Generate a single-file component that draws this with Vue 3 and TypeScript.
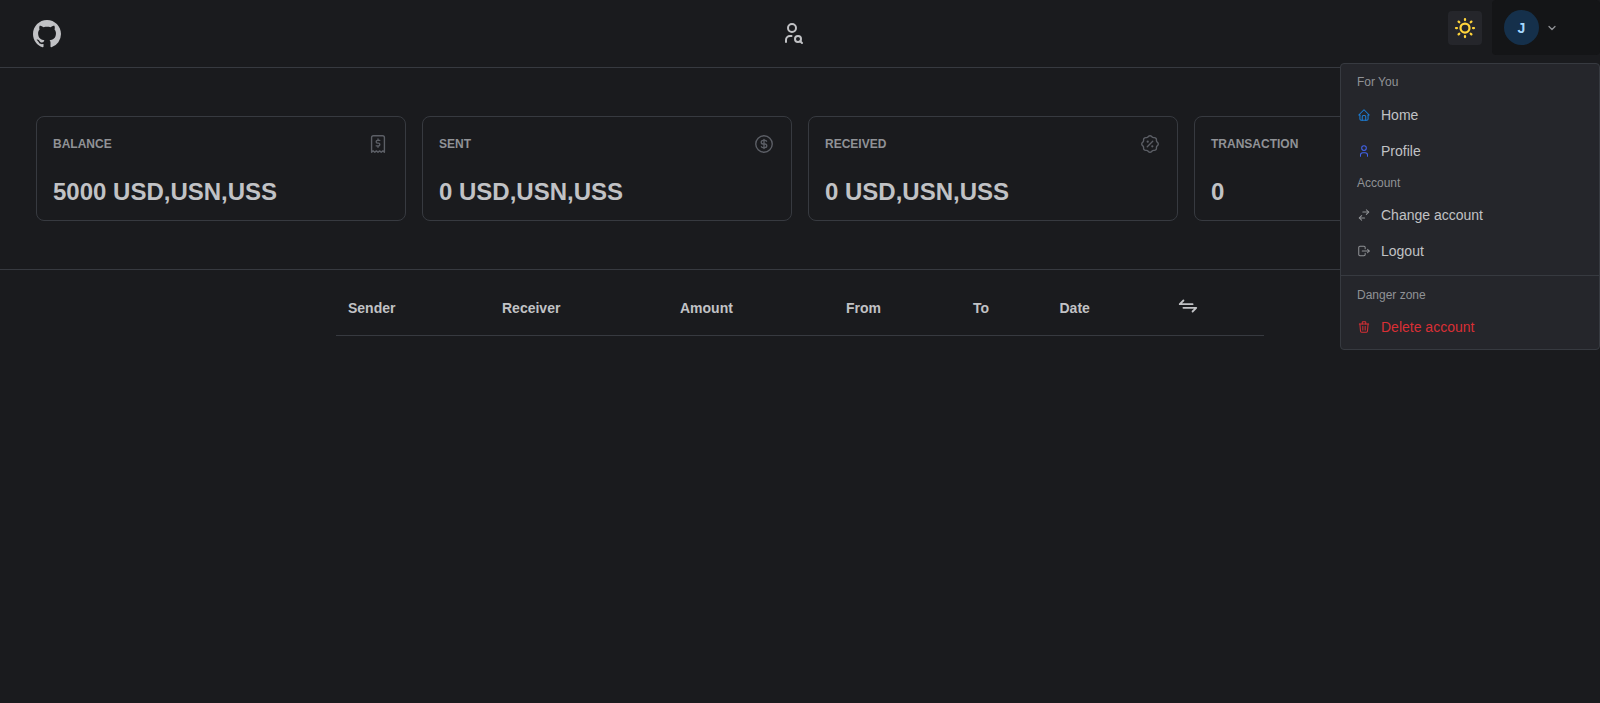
<template>
  <div class="page">
    <header class="topbar">
      <a class="logo" aria-label="GitHub">
        <svg width="28" height="28" viewBox="0 0 16 16" fill="currentColor">
          <path d="M8 0C3.58 0 0 3.58 0 8c0 3.54 2.29 6.53 5.47 7.59.4.07.55-.17.55-.38 0-.19-.01-.82-.01-1.49-2.01.37-2.53-.49-2.69-.94-.09-.23-.48-.94-.82-1.13-.28-.15-.68-.52-.01-.53.63-.01 1.08.58 1.23.82.72 1.21 1.87.87 2.33.66.07-.52.28-.87.51-1.07-1.78-.2-3.64-.89-3.64-3.95 0-.87.31-1.59.82-2.15-.08-.2-.36-1.02.08-2.12 0 0 .67-.21 2.2.82.64-.18 1.32-.27 2-.27.68 0 1.36.09 2 .27 1.53-1.04 2.2-.82 2.2-.82.44 1.1.16 1.92.08 2.12.51.56.82 1.27.82 2.15 0 3.07-1.87 3.75-3.65 3.95.29.25.54.73.54 1.48 0 1.07-.01 1.93-.01 2.2 0 .21.15.46.55.38A8.013 8.013 0 0016 8c0-4.42-3.58-8-8-8z" />
        </svg>
      </a>
      <button class="search-btn" aria-label="Search user">
        <svg class="icon" width="24" height="24" viewBox="0 0 24 24" stroke-width="2">
          <path v-for="d in icons.userSearch" :key="d" :d="d" />
        </svg>
      </button>
      <div class="top-right">
        <button class="theme-btn" aria-label="Toggle theme">
          <svg class="icon" width="24" height="24" viewBox="0 0 24 24" stroke-width="2.25">
            <path v-for="d in icons.sun" :key="d" :d="d" />
          </svg>
        </button>
        <div class="user-btn">
          <span class="avatar">J</span>
          <svg class="icon chevron" width="12" height="12" viewBox="0 0 24 24" stroke-width="2.5">
            <path d="M6 9l6 6l6 -6" />
          </svg>
        </div>
      </div>
    </header>

    <section class="stats">
      <div v-for="card in cards" :key="card.title" class="card">
        <div class="card-head">
          <span class="card-title">{{ card.title }}</span>
          <svg class="icon card-icon" width="22" height="22" viewBox="0 0 24 24" stroke-width="1.5">
            <path v-for="d in card.icon" :key="d" :d="d" />
          </svg>
        </div>
        <div class="card-value">{{ card.value }}</div>
      </div>
    </section>

    <table class="tx-table">
      <colgroup>
        <col v-for="w in colWidths" :key="w" :style="{ width: w + 'px' }" />
      </colgroup>
      <thead>
        <tr>
          <th v-for="h in headers" :key="h">{{ h }}</th>
          <th>
            <svg class="icon swap-icon" width="22" height="22" viewBox="0 0 24 24" stroke-width="2">
              <path v-for="d in icons.exchange" :key="d" :d="d" />
            </svg>
          </th>
        </tr>
      </thead>
    </table>

    <div class="menu">
      <template v-for="group in menu" :key="group.label">
        <div v-if="group.divider" class="menu-divider"></div>
        <div class="menu-label">{{ group.label }}</div>
        <div
          v-for="item in group.items"
          :key="item.label"
          class="menu-item"
          :class="{ danger: item.danger }"
        >
          <svg class="icon" :style="{ color: item.color }" width="14" height="14" viewBox="0 0 24 24" stroke-width="1.75">
            <path v-for="d in item.icon" :key="d" :d="d" />
          </svg>
          <span>{{ item.label }}</span>
        </div>
      </template>
    </div>
  </div>
</template>

<script setup lang="ts">
const icons = {
  userSearch: [
    'M8 7a4 4 0 1 0 8 0a4 4 0 0 0 -8 0',
    'M6 21v-2a4 4 0 0 1 4 -4h1.5',
    'M18 18m-3 0a3 3 0 1 0 6 0a3 3 0 1 0 -6 0',
    'M20.2 20.2l1.8 1.8'
  ],
  sun: [
    'M12 12m-4.5 0a4.5 4.5 0 1 0 9 0a4.5 4.5 0 1 0 -9 0',
    'M3 12h1m8 -9v1m8 8h1m-9 8v1m-6.4 -15.4l.7 .7m12.1 -.7l-.7 .7m0 11.4l.7 .7m-12.1 -.7l-.7 .7'
  ],
  exchange: ['M17 10h-14l4 -4', 'M7 14h14l-4 4'],
  receipt: [
    'M5 21v-16a2 2 0 0 1 2 -2h10a2 2 0 0 1 2 2v16l-1.75 -1.5l-1.75 1.5l-1.75 -1.5l-1.75 1.5l-1.75 -1.5l-1.75 1.5l-1.75 -1.5z',
    'M14 8h-2.5a1.5 1.5 0 0 0 0 3h1a1.5 1.5 0 0 1 0 3h-2.5m2 0v1.5m0 -9v1.5'
  ],
  coin: [
    'M12 12m-9 0a9 9 0 1 0 18 0a9 9 0 1 0 -18 0',
    'M14.8 9a2 2 0 0 0 -1.8 -1h-2a2 2 0 1 0 0 4h2a2 2 0 1 1 0 4h-2a2 2 0 0 1 -1.8 -1',
    'M12 7v10'
  ],
  discount: [
    'M9 15l6 -6',
    'M9.5 9.5m-.5 0a.5 .5 0 1 0 1 0a.5 .5 0 1 0 -1 0',
    'M14.5 14.5m-.5 0a.5 .5 0 1 0 1 0a.5 .5 0 1 0 -1 0',
    'M5 7.2a2.2 2.2 0 0 1 2.2 -2.2h1a2.2 2.2 0 0 0 1.55 -.64l.7 -.7a2.2 2.2 0 0 1 3.12 0l.7 .7c.412 .41 .97 .64 1.55 .64h1a2.2 2.2 0 0 1 2.2 2.2v1c0 .58 .23 1.138 .64 1.55l.7 .7a2.2 2.2 0 0 1 0 3.12l-.7 .7a2.2 2.2 0 0 0 -.64 1.55v1a2.2 2.2 0 0 1 -2.2 2.2h-1a2.2 2.2 0 0 0 -1.55 .64l-.7 .7a2.2 2.2 0 0 1 -3.12 0l-.7 -.7a2.2 2.2 0 0 0 -1.55 -.64h-1a2.2 2.2 0 0 1 -2.2 -2.2v-1a2.2 2.2 0 0 0 -.64 -1.55l-.7 -.7a2.2 2.2 0 0 1 0 -3.12l.7 -.7a2.2 2.2 0 0 0 .64 -1.55v-1'
  ],
  home: [
    'M5 12l-2 0l9 -9l9 9l-2 0',
    'M5 12v7a2 2 0 0 0 2 2h10a2 2 0 0 0 2 -2v-7',
    'M9 21v-6a2 2 0 0 1 2 -2h2a2 2 0 0 1 2 2v6'
  ],
  user: ['M8 7a4 4 0 1 0 8 0a4 4 0 0 0 -8 0', 'M6 21v-2a4 4 0 0 1 4 -4h4a4 4 0 0 1 4 4v2'],
  switchAcc: ['M16 3l4 4l-4 4', 'M10 7l10 0', 'M8 13l-4 4l4 4', 'M4 17l9 0'],
  logout: [
    'M14 8v-2a2 2 0 0 0 -2 -2h-7a2 2 0 0 0 -2 2v12a2 2 0 0 0 2 2h7a2 2 0 0 0 2 -2v-2',
    'M9 12h12l-3 -3',
    'M18 15l3 -3'
  ],
  trash: [
    'M4 7l16 0',
    'M10 11l0 6',
    'M14 11l0 6',
    'M5 7l1 12a2 2 0 0 0 2 2h8a2 2 0 0 0 2 -2l1 -12',
    'M9 7v-3a1 1 0 0 1 1 -1h4a1 1 0 0 1 1 1v3'
  ]
};

const cards = [
  { title: 'BALANCE', value: '5000 USD,USN,USS', icon: icons.receipt },
  { title: 'SENT', value: '0 USD,USN,USS', icon: icons.coin },
  { title: 'RECEIVED', value: '0 USD,USN,USS', icon: icons.discount },
  { title: 'TRANSACTION', value: '0', icon: icons.receipt }
];

const headers = ['Sender', 'Receiver', 'Amount', 'From', 'To', 'Date'];
const colWidths = [154, 178, 166, 127, 86.5, 117.5, 99];

type MenuItem = { label: string; icon: string[]; color?: string; danger?: boolean };
type MenuGroup = { label: string; divider?: boolean; items: MenuItem[] };

const menu: MenuGroup[] = [
  {
    label: 'For You',
    items: [
      { label: 'Home', icon: icons.home, color: '#1c7ed6' },
      { label: 'Profile', icon: icons.user, color: '#4263eb' }
    ]
  },
  {
    label: 'Account',
    items: [
      { label: 'Change account', icon: icons.switchAcc },
      { label: 'Logout', icon: icons.logout }
    ]
  },
  {
    label: 'Danger zone',
    divider: true,
    items: [{ label: 'Delete account', icon: icons.trash, color: '#d92f35', danger: true }]
  }
];
</script>

<style>
html,
body {
  background: #1a1b1e;
}
</style>

<style scoped>
.page {
  position: relative;
  min-height: 703px;
  background: #1a1b1e;
  color: #c1c2c5;
  font-family: "Liberation Sans", Arial, sans-serif;
  font-size: 14px;
  overflow: hidden;
}

.icon {
  display: block;
  fill: none;
  stroke: currentColor;
  stroke-linecap: round;
  stroke-linejoin: round;
}

.topbar {
  display: grid;
  grid-template-columns: 1fr auto 1fr;
  align-items: start;
  height: 67px;
  border-bottom: 1px solid #373a40;
}

.logo {
  display: block;
  width: 28px;
  height: 28px;
  margin: 20px 0 0 33px;
  color: #c1c2c5;
}

.search-btn {
  display: block;
  padding: 0;
  margin: 21px 16px 0 0;
  border: none;
  background: none;
  color: #c1c2c5;
}

.top-right {
  display: flex;
  justify-content: flex-end;
  gap: 10px;
}

.theme-btn {
  display: flex;
  align-items: center;
  justify-content: center;
  width: 34px;
  height: 34px;
  margin-top: 11px;
  padding: 0;
  border: none;
  border-radius: 4px;
  background: #25262b;
  color: #ffd43b;
}

.user-btn {
  display: flex;
  align-items: center;
  gap: 7px;
  width: 108px;
  height: 55px;
  padding-left: 12px;
  box-sizing: border-box;
  border-radius: 4px;
  background: #141517;
}

.avatar {
  display: flex;
  align-items: center;
  justify-content: center;
  width: 35px;
  height: 35px;
  border-radius: 50%;
  background: rgba(24, 100, 171, 0.35);
  color: #a5d8ff;
  font-size: 14px;
  font-weight: 700;
}

.chevron {
  color: #909296;
}

.stats {
  display: grid;
  grid-template-columns: repeat(4, 1fr);
  gap: 16px;
  padding: 48px 36px;
  border-bottom: 1px solid #373a40;
}

.card {
  height: 105px;
  padding: 16px;
  box-sizing: border-box;
  border: 1px solid #373a40;
  border-radius: 8px;
}

.card-head {
  display: flex;
  align-items: center;
  justify-content: space-between;
  height: 22px;
}

.card-title {
  font-size: 12px;
  font-weight: 700;
  color: #909296;
}

.card-icon {
  color: #5c5f66;
}

.card-value {
  margin-top: 21px;
  font-size: 24px;
  font-weight: 700;
  line-height: 32px;
}

.tx-table {
  width: 928px;
  margin: 11px auto 0;
  border-collapse: collapse;
  table-layout: fixed;
}

.tx-table th {
  padding: 16px 12px;
  border-bottom: 1px solid #373a40;
  text-align: left;
  font-size: 14px;
  font-weight: 700;
  color: #c1c2c5;
}

.swap-icon {
  transform: translateY(-2px);
}

.menu {
  position: absolute;
  top: 63px;
  right: 0;
  width: 260px;
  padding: 4px;
  box-sizing: border-box;
  border: 1px solid #373a40;
  border-radius: 4px;
  background: #25262b;
}

.menu-label {
  padding: 8.3px 12px;
  font-size: 12px;
  line-height: 12px;
  color: #909296;
}

.menu-item {
  display: flex;
  align-items: center;
  gap: 10px;
  height: 36px;
  padding: 0 12px;
  color: #c1c2c5;
}

.menu-item .icon {
  color: #909296;
}

.menu-item.danger {
  color: #d92f35;
}

.menu-divider {
  margin: 5.5px -4px 4.7px;
  border-top: 1px solid #373a40;
}
</style>
